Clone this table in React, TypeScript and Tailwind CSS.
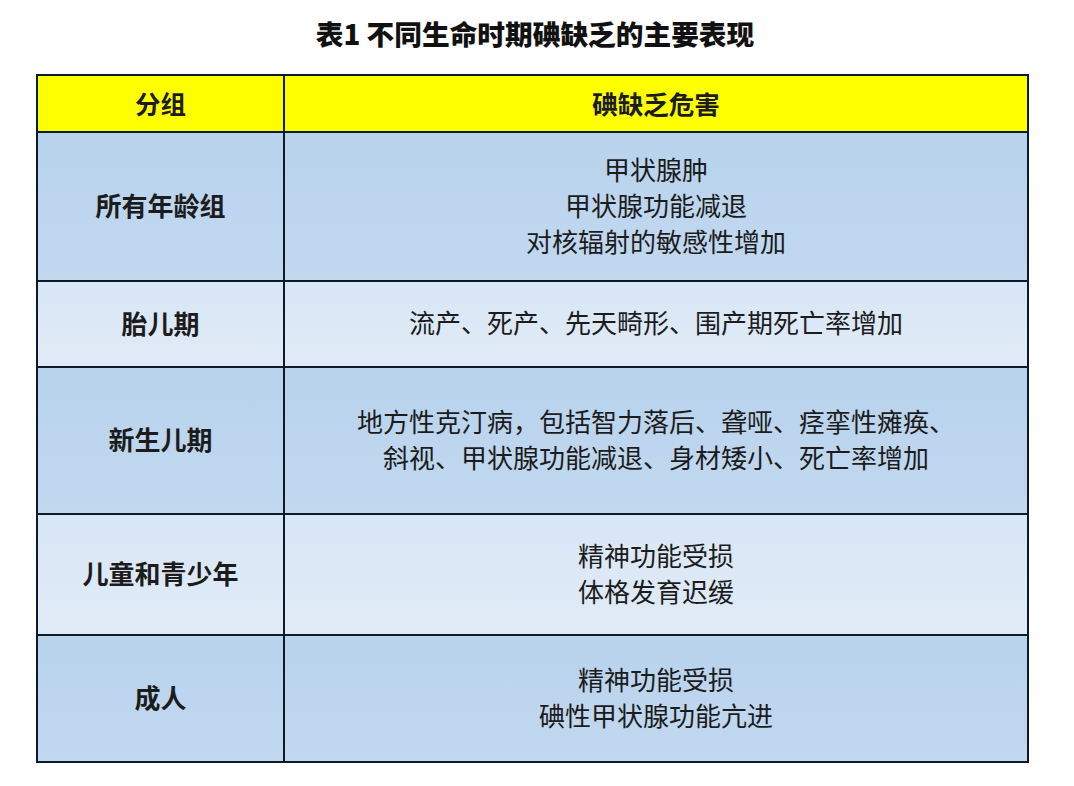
import React from "react";

const rows: { label: string; lines: string[]; h: number; bg: string }[] = [
  { label: "所有年龄组", lines: ["甲状腺肿", "甲状腺功能减退", "对核辐射的敏感性增加"], h: 149, bg: "odd" },
  { label: "胎儿期", lines: ["流产、死产、先天畸形、围产期死亡率增加"], h: 86, bg: "even" },
  {
    label: "新生儿期",
    lines: ["地方性克汀病，包括智力落后、聋哑、痉挛性瘫痪、", "斜视、甲状腺功能减退、身材矮小、死亡率增加"],
    h: 147,
    bg: "odd",
  },
  { label: "儿童和青少年", lines: ["精神功能受损", "体格发育迟缓"], h: 121, bg: "even" },
  { label: "成人", lines: ["精神功能受损", "碘性甲状腺功能亢进"], h: 127, bg: "odd" },
];

export default function App() {
  return (
    <div
      className="w-[1074px] h-[786px] bg-white text-[#1c1c1c]"
      style={{ fontFamily: '"Noto Sans CJK SC", "Noto Sans", sans-serif' }}
    >
      <div className="h-[74px] flex items-center justify-center pb-[6px]">
        <h1 className="text-[27.7px] font-black leading-none text-[#111] ml-[-4px]">表1 不同生命时期碘缺乏的主要表现</h1>
      </div>
      <div className="ml-[36px] w-[993px] border-2 border-[#0d1a2a] flex flex-col">
        <div className="h-[55px] flex bg-[#ffff00]">
          <div className="w-[247px] border-r-2 border-[#0d1a2a] flex items-center justify-center text-[25.5px] font-bold">
            分组
          </div>
          <div className="flex-1 flex items-center justify-center text-[25.5px] font-bold">碘缺乏危害</div>
        </div>
        {rows.map((r, i) => (
          <div
            key={i}
            className={
              "flex border-t-2 border-[#0d1a2a] " +
              (r.bg === "odd"
                ? "bg-gradient-to-b from-[#b9d3ed] to-[#c1d8ef]"
                : "bg-gradient-to-b from-[#d8e6f5] to-[#e1ebf7]")
            }
            style={{ height: r.h }}
          >
            <div className="w-[247px] border-r-2 border-[#0d1a2a] flex items-center justify-center text-[26px] font-bold pb-[4px]">
              {r.label}
            </div>
            <div className="flex-1 flex flex-col items-center justify-center text-[26px] leading-[36px] pb-[4px]">
              {r.lines.map((l, j) => (
                <div key={j}>{l}</div>
              ))}
            </div>
          </div>
        ))}
      </div>
    </div>
  );
}
